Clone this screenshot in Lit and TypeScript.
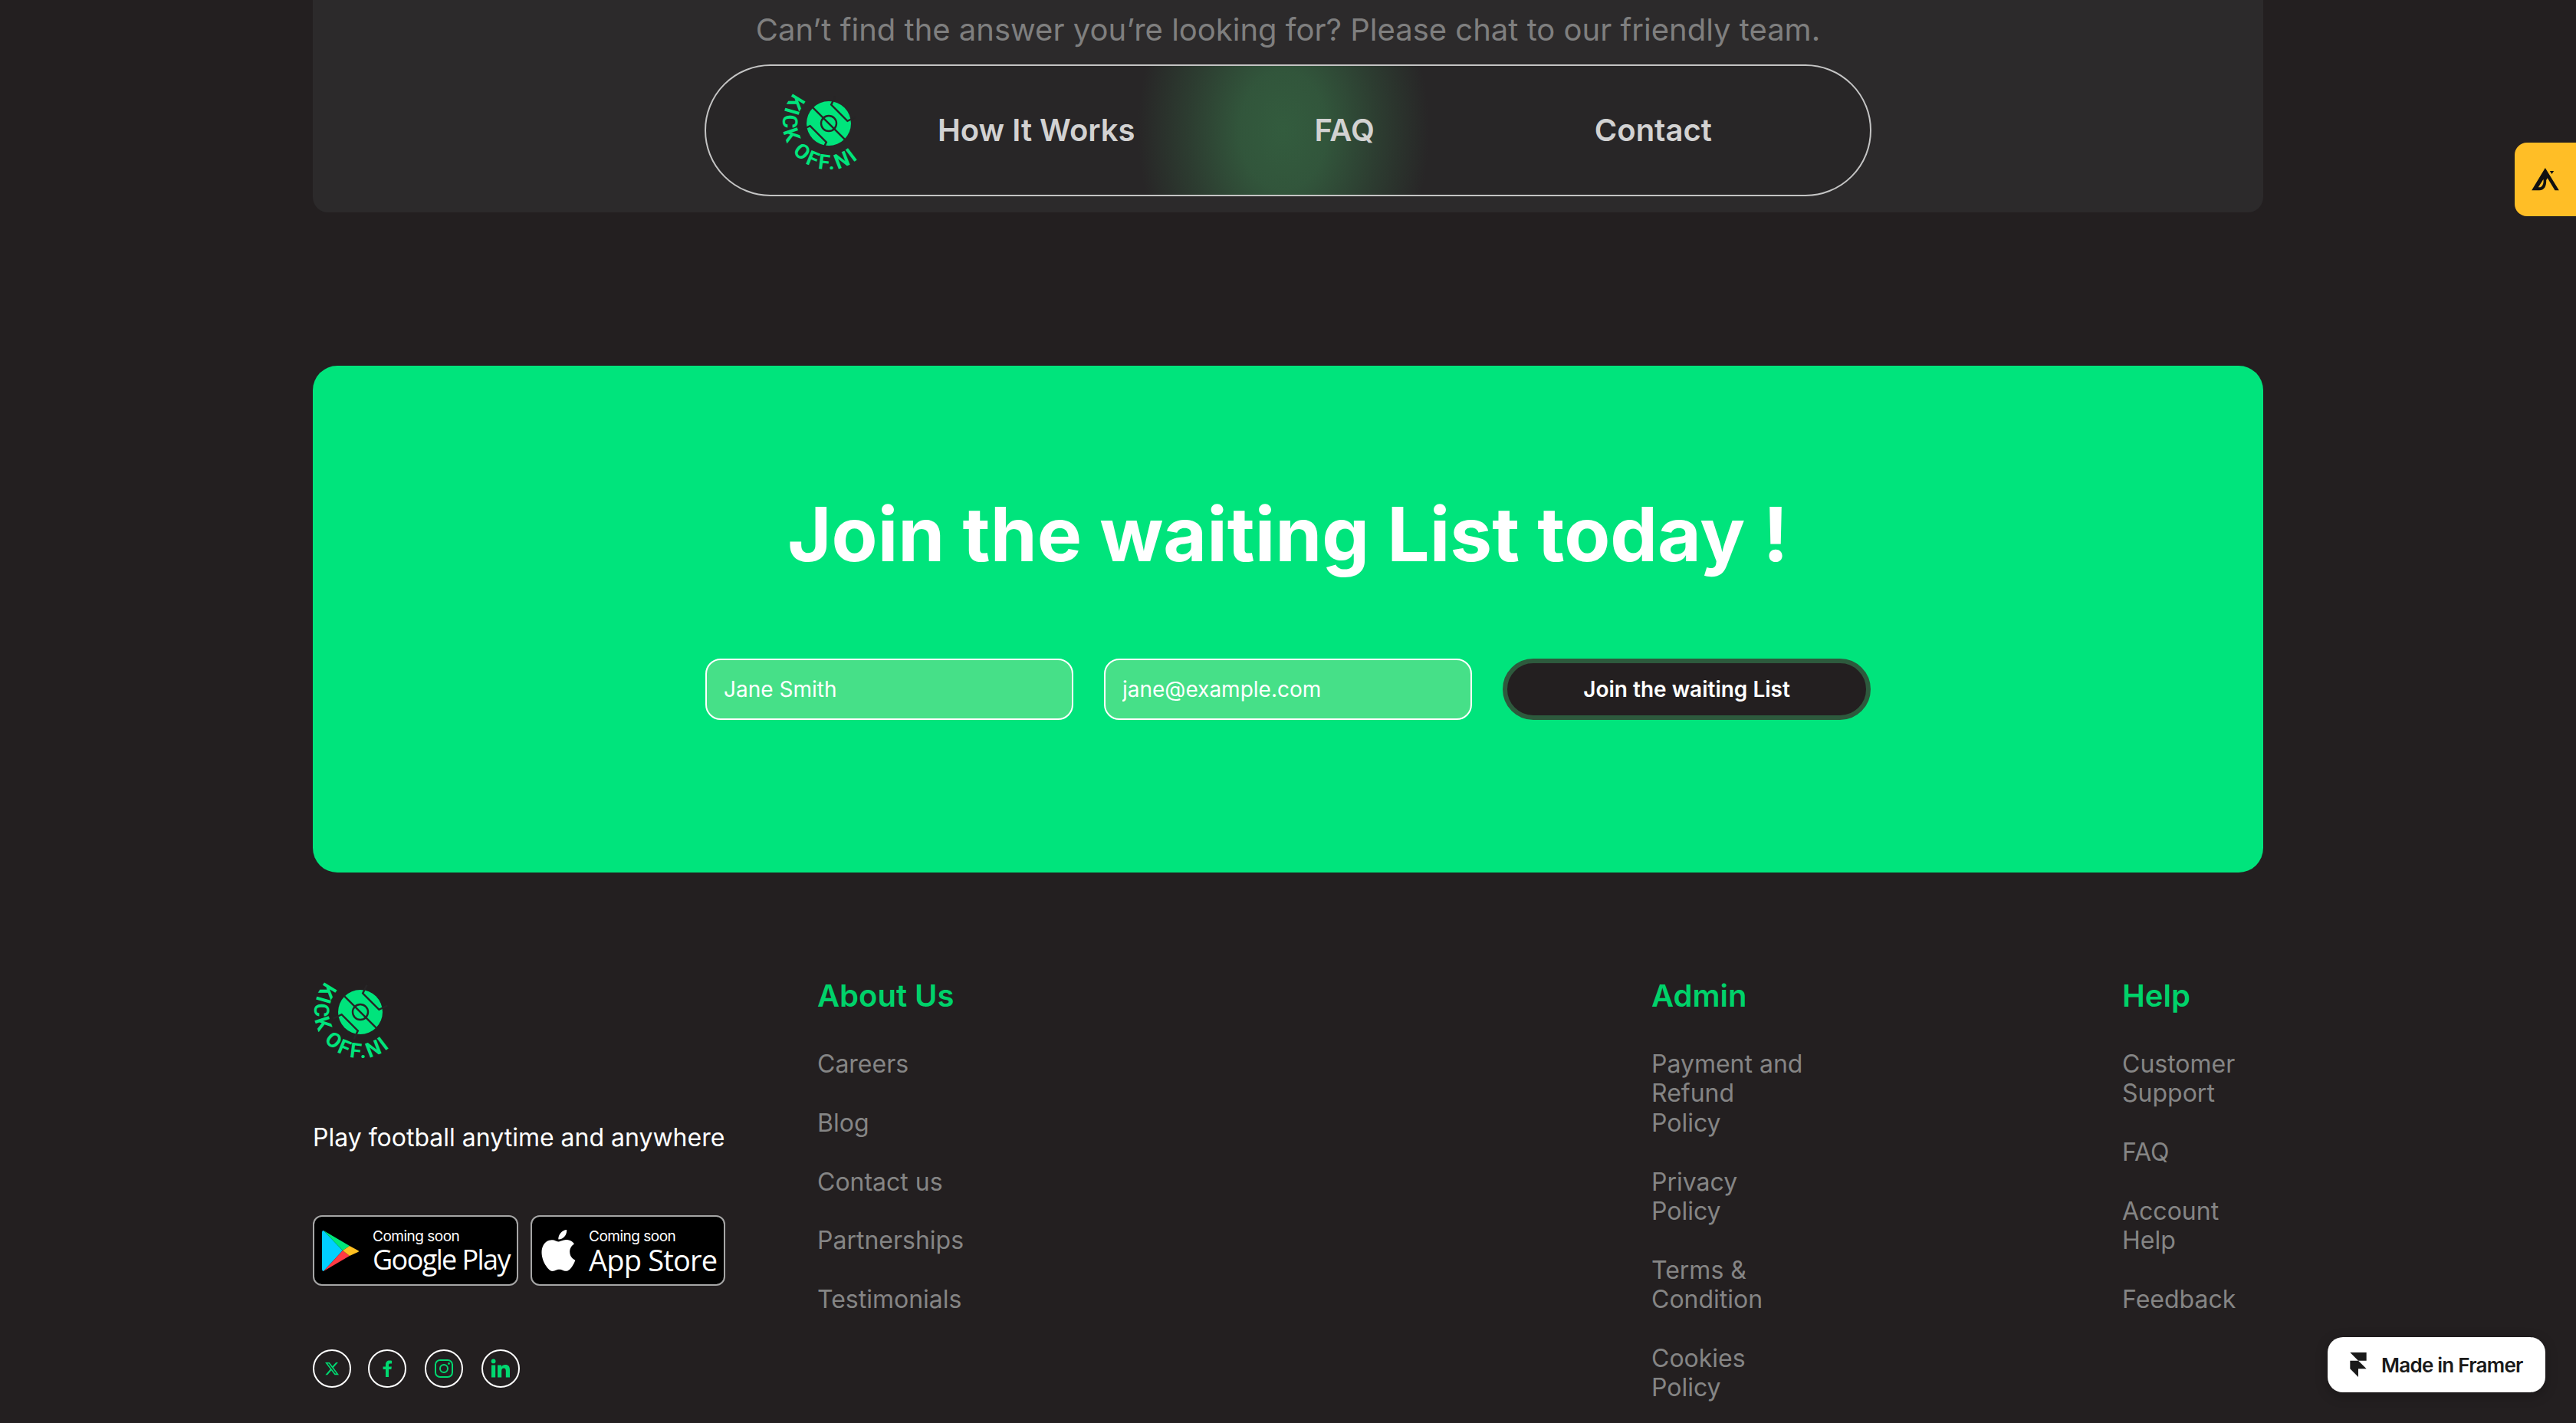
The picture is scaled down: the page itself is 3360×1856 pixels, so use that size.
import { LitElement, html, css, svg } from "lit";
import { customElement } from "lit/decorators.js";

const logo = (id: string) => html`<svg class="logo" viewBox="0 0 100 100" width="100" height="100" aria-label="Kick Off NI">
  ${svg`
  <defs><path id="${id}" d="M 16.7 1.6 A 60 60 0 0 0 104.4 83.4" fill="none"/></defs>
  <text font-family="'Liberation Sans Narrow', Roboto, sans-serif" font-weight="700" font-size="27" fill="#00e47c" letter-spacing="3.2"><textPath href="#${id}">KICK OFF.NI</textPath></text>
  <circle cx="62" cy="41" r="29" fill="#00e47c"/>
  <g transform="translate(62 41) rotate(45)" fill="none" stroke="#272526" stroke-width="2.4">
    <path d="M-30 0H30"/>
    <circle r="10"/>
    <path d="M-19 -31 L-15 -19.5 H15 L19 -31"/>
    <path d="M-19 31 L-15 19.5 H15 L19 31"/>
  </g>`}
</svg>`;

@customElement("app-root")
export class AppRoot extends LitElement {
  static styles = css`
    :host { display: block; position: relative; width: 3360px; height: 1856px; overflow: hidden; background: #231f20; font-family: Inter, "Liberation Sans", sans-serif; }
    .wrap { width: 2544px; margin-left: 408px; }
    .panel { height: 277px; box-sizing: border-box; padding-top: 15px; background: #2c2a2b; border-radius: 0 0 20px 20px; display: flex; flex-direction: column; align-items: center; }
    .ask { margin: 0 0 21px; font-size: 40px; line-height: 48px; color: #7f7f7f; }
    .nav { width: 1522px; height: 172px; box-sizing: border-box; border: 2px solid #c4c4c4; border-radius: 86px; display: flex; align-items: center; padding-left: 98px;
      background: radial-gradient(ellipse 190px 260px at 753px 50%, #335c3e 0%, rgba(51,92,62,.88) 30%, rgba(51,92,62,.42) 65%, rgba(51,92,62,0) 100%), #282627; }
    .nav a { font-size: 40px; font-weight: 600; line-height: 48px; color: #d2d2d2; }
    .logo { display: block; flex: none; overflow: visible; }
    .l1 { margin-left: 104px; }
    .l2 { margin-left: 234px; }
    .l3 { margin-left: 287px; }
    .card { margin-top: 200px; height: 661px; box-sizing: border-box; padding-top: 158px; background: #00e47c; border-radius: 32px; display: flex; flex-direction: column; align-items: center; }
    h1 { margin: 0 0 100px; font-size: 98px; line-height: 124px; font-weight: 700; color: #fff; }
    form { display: flex; gap: 40px; }
    input { width: 480px; height: 80px; box-sizing: border-box; border: 2px solid #fff; border-radius: 20px; background: #46e088; padding: 0 0 0 22px; font: 400 28px Inter, sans-serif; color: #fff; outline: none; }
    input::placeholder { color: #fff; opacity: 1; }
    button { width: 480px; height: 80px; box-sizing: border-box; border: 6px solid #2d5a3d; border-radius: 40px; background: #231f20; color: #fff; font: 600 28px Inter, sans-serif; }
    .foot { padding-top: 137px; display: grid; grid-template-columns: 658px 1088px 614px 184px; }
    .brand { padding-top: 4px; }
    .tag { margin: 86px 0 82px; font-size: 32px; line-height: 38px; color: #fff; font-weight: 400; white-space: nowrap; }
    .stores { display: flex; gap: 16px; }
    .store { height: 92px; box-sizing: border-box; background: #000; border: 2px solid #a6a6a6; border-radius: 12px; display: flex; align-items: center; color: #fff; }
    .store svg { flex: none; display: block; }
    .gp { width: 268px; padding-left: 10px; gap: 17px; }
    .as { width: 254px; padding-left: 12px; gap: 16px; }
    .store span { display: block; }
    .soon { font-size: 19px; line-height: 20px; padding-top: 4px; font-weight: 400; letter-spacing: -.5px; }
    .big { font-size: 38px; line-height: 40px; white-space: nowrap; }
    .gp .big { font-family: "Open Sans", sans-serif; font-size: 36px; letter-spacing: -1.6px; }
    .as .big { font-family: "Open Sans", sans-serif; letter-spacing: -.8px; font-weight: 500; }
    .socials { margin-top: 83px; display: flex; gap: 24px; }
    .soc { width: 50px; height: 50px; box-sizing: border-box; border: 2px solid #fff; border-radius: 50%; display: flex; align-items: center; justify-content: center; }
    .soc svg { display: block; fill: #00d870; }
    .first { margin-right: -2px; }
    h3 { margin: 0 0 46px; font-size: 40px; line-height: 48px; font-weight: 600; color: #00d26a; }
    ul { list-style: none; margin: 0; padding: 0; display: flex; flex-direction: column; gap: 38.4px; }
    li { font-size: 32px; line-height: 38.4px; color: #858585; white-space: nowrap; }
    .yak { position: absolute; left: 3280px; top: 186px; width: 80px; height: 96px; background: #ffbe26; border-radius: 16px 0 0 16px; display: flex; align-items: center; justify-content: center; }
    .framer { position: absolute; left: 3036px; top: 1744px; width: 284px; height: 72px; box-sizing: border-box; padding-left: 29px; gap: 19px; background: #fff; border-radius: 20px; box-shadow: 0 4px 16px rgba(0,0,0,.25); display: flex; align-items: center; font-size: 26px; font-weight: 600; color: #1a1a1a; letter-spacing: -.75px; white-space: nowrap; }
  `;

  render() {
    return html`
      <div class="wrap">
        <section class="panel">
          <p class="ask">Can’t find the answer you’re looking for? Please chat to our friendly team.</p>
          <nav class="nav">
            ${logo("arc-a")}
            <a class="l1">How It Works</a><a class="l2">FAQ</a><a class="l3">Contact</a>
          </nav>
        </section>
        <section class="card">
          <h1>Join the waiting List today !</h1>
          <form>
            <input placeholder="Jane Smith" />
            <input placeholder="jane@example.com" />
            <button type="button">Join the waiting List</button>
          </form>
        </section>
        <footer class="foot">
          <div class="brand">
            ${logo("arc-b")}
            <p class="tag">Play football anytime and anywhere</p>
            <div class="stores">
              <div class="store gp">
                <svg width="49" height="53" viewBox="0 0 49 53">
                  <path d="M0 2 Q0 0 2 0 L27 26 L2 53 Q0 53 0 50Z" fill="#00cfff"/>
                  <path d="M2 0 L36 20 L27 26Z" fill="#00e87a"/>
                  <path d="M2 53 L36 33 L27 26Z" fill="#ff3a44"/>
                  <path d="M36 20 L47 26 Q49 27 47 28 L36 33 L27 26Z" fill="#ffc021"/>
                </svg>
                <div><span class="soon">Coming soon</span><span class="big">Google Play</span></div>
              </div>
              <div class="store as">
                <svg width="46" height="54" viewBox="0 0 20.5 24" fill="#fff"><g transform="translate(-2)"><path d="M12.152 6.896c-.948 0-2.415-1.078-3.96-1.04-2.04.027-3.91 1.183-4.961 3.014-2.117 3.675-.546 9.103 1.519 12.09 1.013 1.454 2.208 3.09 3.792 3.039 1.52-.065 2.09-.987 3.935-.987 1.831 0 2.35.987 3.96.948 1.637-.026 2.676-1.48 3.676-2.948 1.156-1.688 1.636-3.325 1.662-3.415-.039-.013-3.182-1.221-3.22-4.857-.026-3.04 2.48-4.494 2.597-4.559-1.429-2.09-3.623-2.324-4.39-2.376-2-.156-3.675 1.09-4.61 1.09zM15.53 3.83c.843-1.012 1.4-2.427 1.245-3.83-1.207.052-2.662.805-3.532 1.818-.78.896-1.454 2.338-1.273 3.714 1.338.104 2.715-.688 3.559-1.701"/></g></svg>
                <div><span class="soon">Coming soon</span><span class="big">App Store</span></div>
              </div>
            </div>
            <div class="socials">
              <div class="soc first"><svg width="20" height="20" viewBox="0 0 24 24"><path d="M18.244 2.25h3.308l-7.227 8.26 8.502 11.24H16.17l-5.214-6.817L4.99 21.75H1.68l7.73-8.835L1.254 2.25H8.08l4.713 6.231zm-1.161 17.52h1.833L7.084 4.126H5.117z"/></svg></div>
              <div class="soc"><svg width="24" height="24" viewBox="0 0 24 24"><path d="M14 23v-10h3.4l.5-3.6H14V7.3c0-1.1.5-1.9 2-1.9h2.1V1.7C17.5 1.6 16.3 1.5 15.1 1.5c-3.2 0-5.1 2-5.1 5.2v2.7H6.6V13H10v10z"/></svg></div>
              <div class="soc"><svg width="26" height="26" viewBox="0 0 26 26"><rect x="2" y="2" width="22" height="22" rx="6" fill="none" stroke="#00d870" stroke-width="2"/><circle cx="13" cy="13" r="5" fill="none" stroke="#00d870" stroke-width="2"/><circle cx="19.5" cy="6.5" r="1.4"/></svg></div>
              <div class="soc"><svg width="26" height="26" viewBox="0 0 26 26"><circle cx="3.6" cy="3.4" r="2.9"/><rect x="1" y="8.5" width="5.2" height="16"/><path d="M9 8.5h5v2.2c.9-1.6 2.7-2.6 5-2.6 4.2 0 6 2.6 6 6.8v9.6h-5.2v-8.6c0-2.3-.8-3.5-2.7-3.5-2 0-2.9 1.3-2.9 3.5v8.6H9z"/></svg></div>
            </div>
          </div>
          <div><h3>About Us</h3><ul><li>Careers</li><li>Blog</li><li>Contact us</li><li>Partnerships</li><li>Testimonials</li></ul></div>
          <div><h3>Admin</h3><ul><li>Payment and<br />Refund<br />Policy</li><li>Privacy<br />Policy</li><li>Terms &amp;<br />Condition</li><li>Cookies<br />Policy</li></ul></div>
          <div><h3>Help</h3><ul><li>Customer<br />Support</li><li>FAQ</li><li>Account<br />Help</li><li>Feedback</li></ul></div>
        </footer>
      </div>
      <div class="yak"><svg width="36" height="30" viewBox="0 0 107 90" fill="#111"><path fill-rule="evenodd" d="M53 0 L107 88 H91 L62 40 L57 48 C58 70 50 88 30 88 H0Z M26 76 L46 44 C48 60 42 76 30 76Z"/><path d="M71 12 H87 L79 24Z"/></svg></div>
      <div class="framer"><svg width="22" height="32" viewBox="0 0 14 21" fill="#1a1a1a"><path d="M0 0h14v7H7zm0 7h7l7 7H7v7l-7-7z"/></svg>Made in Framer</div>
    `;
  }
}
